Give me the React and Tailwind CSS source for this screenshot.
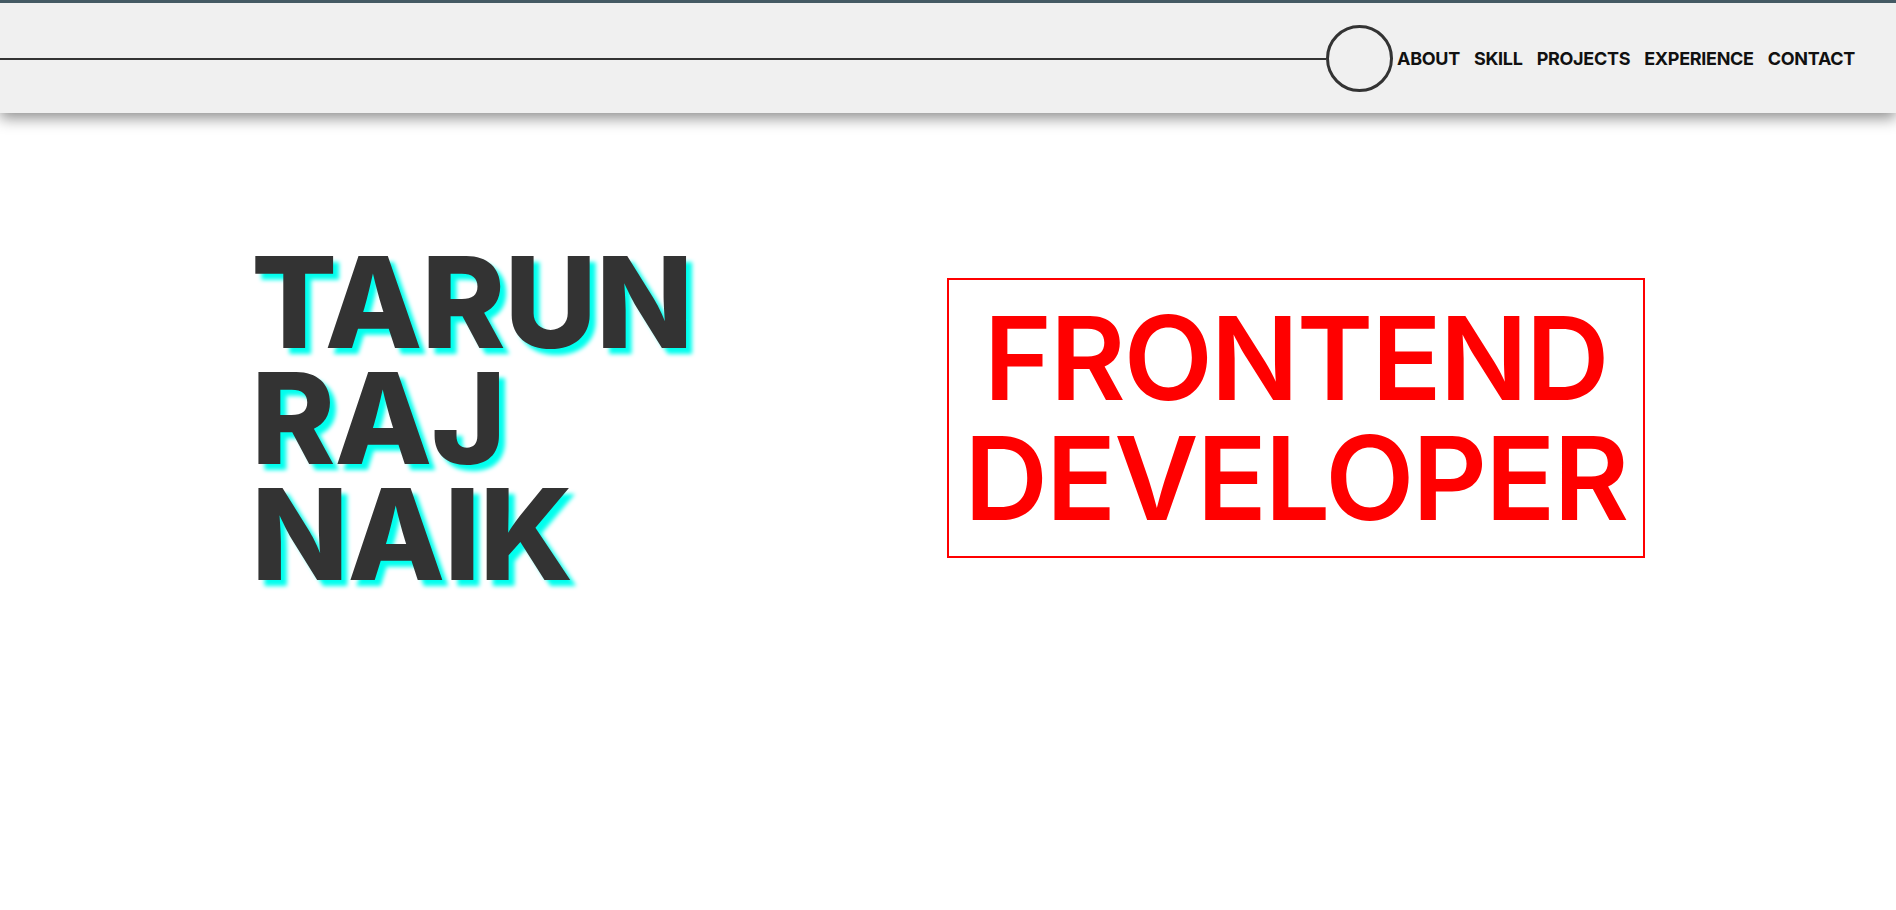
const links = ["ABOUT", "SKILL", "PROJECTS", "EXPERIENCE", "CONTACT"];

function Header() {
  return (
    <header className="h-[113px] bg-[#f0f0f0] border-t-[3px] border-[#455a64] flex items-center pt-[2px] shadow-[0_5px_14px_rgba(0,0,0,0.45)] relative z-10">
      <div className="flex-1 h-[2px] bg-[#333]" />
      <div className="w-[67px] h-[67px] rounded-full border-[3px] border-[#333] -mt-[2px]" />
      <nav className="ml-[4px] pr-[41px]">
        <ul className="flex gap-[14px]">
          {links.map((l) => (
            <li key={l} className="text-[18px] font-bold text-[#111] tracking-[-0.3px] leading-none">
              {l}
            </li>
          ))}
        </ul>
      </nav>
    </header>
  );
}

export default function App() {
  return (
    <div className="min-h-screen bg-white font-['Inter',sans-serif]">
      <Header />
      <main className="h-[610px] flex items-center justify-evenly">
        <h1 className="w-[444px] text-[127px] leading-[116px] font-extrabold tracking-[-1px] text-[#333] [text-shadow:6px_6px_4px_#00ffee]">
          TARUN
          <br />
          RAJ
          <br />
          NAIK
        </h1>
        <div className="w-[698px] border-2 border-[#ff0000] py-[18px] text-center">
          <h2 className="text-[116px] leading-[120px] font-semibold tracking-[-2px] text-[#ff0000]">
            FRONTEND
            <br />
            DEVELOPER
          </h2>
        </div>
      </main>
    </div>
  );
}
